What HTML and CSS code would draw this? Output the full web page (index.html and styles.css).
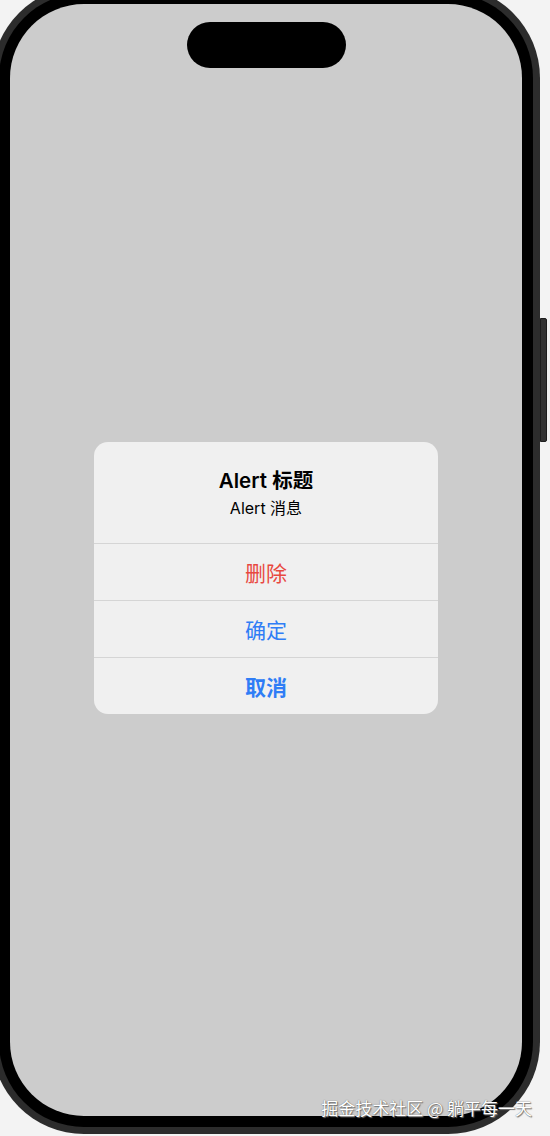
FILE: index.html
```html
<!DOCTYPE html>
<html lang="zh-CN">
<head>
<meta charset="utf-8">
<title>Alert</title>
<link rel="stylesheet" href="styles.css">
</head>
<body>
<div class="phone">
  <div class="side-button"></div>
  <div class="bezel">
    <div class="screen">
      <div class="island"></div>
      <div class="alert">
        <div class="alert-head">
          <div class="alert-title">Alert 标题</div>
          <div class="alert-message">Alert 消息</div>
        </div>
        <div class="alert-action destructive">删除</div>
        <div class="alert-action">确定</div>
        <div class="alert-action cancel">取消</div>
      </div>
    </div>
  </div>
</div>
<div class="watermark">掘金技术社区 @ 躺平每一天</div>
</body>
</html>
```
FILE: styles.css
```css
html, body {
  margin: 0;
  padding: 0;
}
body {
  background: #f3f3f3;
  width: 550px;
  height: 1136px;
  overflow: hidden;
  position: relative;
  font-family: Inter, "Noto Sans CJK SC", sans-serif;
}
.phone {
  position: relative;
  width: 548px;
  height: 1148px;
  margin: -14px 0 0 -8px;
  box-sizing: border-box;
  padding: 7px;
  border-radius: 92px;
  background: #2c2c2c;
}
.side-button {
  position: absolute;
  left: 548px;
  top: 332px;
  width: 7px;
  height: 124px;
  background: #333;
  border: 1px solid #1e1e1e;
  box-sizing: border-box;
  border-radius: 0 2px 2px 0;
}
.bezel {
  height: 100%;
  box-sizing: border-box;
  padding: 11px;
  border-radius: 85px;
  background: #000;
}
.screen {
  height: 100%;
  border-radius: 74px;
  background: #cccccc;
  display: flex;
  flex-direction: column;
  align-items: center;
}
.island {
  margin-top: 18px;
  width: 159px;
  height: 46px;
  border-radius: 23px;
  background: #000;
}
.alert {
  margin-top: 374px;
  width: 344px;
  border-radius: 14px;
  background: #f0f0f0;
  overflow: hidden;
  display: flex;
  flex-direction: column;
}
.alert-head {
  height: 101px;
  box-sizing: border-box;
  padding-top: 26px;
  text-align: center;
  color: #000;
}
.alert-title {
  font-size: 20.5px;
  font-weight: 600;
  line-height: 26px;
}
.alert-message {
  margin-top: 4px;
  font-size: 16px;
  line-height: 20px;
}
.alert-action {
  height: 57px;
  box-sizing: border-box;
  border-top: 1px solid #d5d5d5;
  display: flex;
  align-items: center;
  justify-content: center;
  font-size: 21px;
  color: #2f7df6;
}
.alert-action.destructive {
  color: #e8483f;
}
.alert-action.cancel {
  font-weight: 600;
}
.watermark {
  position: absolute;
  right: 18px;
  top: 1097px;
  font-size: 17px;
  line-height: 22px;
  color: #ffffff;
  text-shadow: 0 0 1px #555, 1px 1px 1px #777;
  font-family: "Noto Sans CJK SC", sans-serif;
  white-space: nowrap;
}
```
